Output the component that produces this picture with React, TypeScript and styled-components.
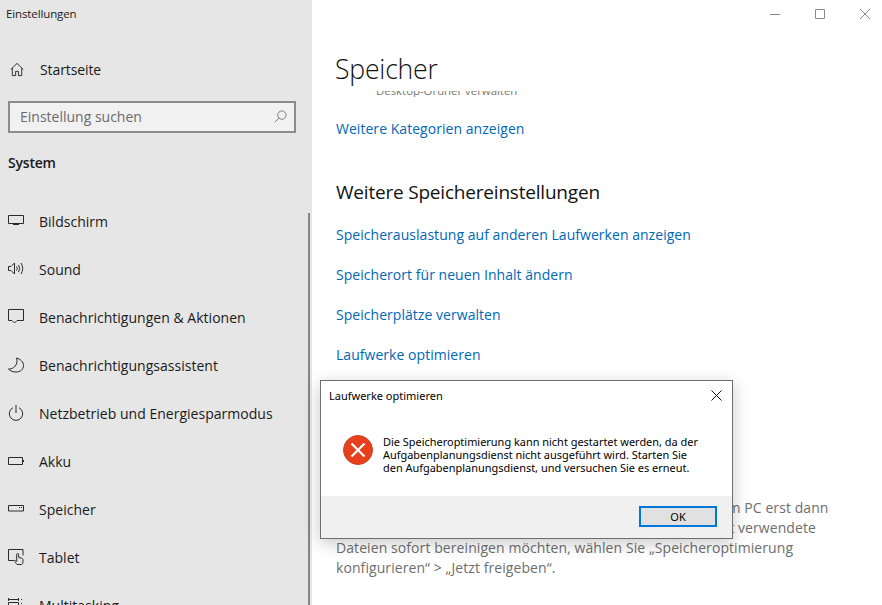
import styled, { createGlobalStyle } from 'styled-components';
import type { ReactNode } from 'react';

const GlobalStyle = createGlobalStyle`
  html, body {
    margin: 0;
    padding: 0;
    background: #fff;
    overflow: hidden;
  }
  * {
    box-sizing: border-box;
  }
`;

const Page = styled.div`
  position: relative;
  width: 882px;
  height: 605px;
  display: flex;
  overflow: hidden;
  background: #fff;
  font-family: "Open Sans", "Liberation Sans", sans-serif;
  color: #1a1a1a;
`;

const Sidebar = styled.aside`
  position: relative;
  flex: 0 0 312px;
  height: 605px;
  background: #e6e6e6;
  overflow: hidden;
`;

const AppTitle = styled.div`
  height: 28px;
  padding-left: 6px;
  font-size: 11.5px;
  line-height: 28px;
  letter-spacing: -0.12px;
`;

const HomeRow = styled.div`
  height: 28px;
  margin-top: 28px;
  padding: 0 0 1px 10px;
  display: flex;
  align-items: center;
  gap: 14px;
  font-size: 14px;
  letter-spacing: -0.1px;
`;

const SearchBox = styled.div`
  width: 288px;
  height: 32px;
  margin: 17px 0 0 8px;
  padding: 0 7px 2px 10px;
  display: flex;
  align-items: center;
  justify-content: space-between;
  background: #f1f1f1;
  border: 2px solid #8c8c8c;
  font-size: 14px;
  color: #6b6b6b;
`;

const SectionTitle = styled.div`
  height: 20px;
  margin: 20px 0 0 8px;
  font-size: 14px;
  font-weight: 600;
  line-height: 20px;
  letter-spacing: -0.2px;
`;

const NavList = styled.nav`
  margin-top: 24px;
  display: flex;
  flex-direction: column;
`;

const NavItem = styled.div`
  height: 48px;
  padding-left: 8px;
  display: flex;
  align-items: center;
  gap: 15px;
  font-size: 14px;
  letter-spacing: 0.02px;
  white-space: nowrap;
`;

const IconBox = styled.span`
  flex: 0 0 16px;
  width: 16px;
  height: 16px;
  display: block;
  color: #2a2a2a;
`;

const ScrollThumb = styled.div`
  position: absolute;
  top: 213px;
  right: 2px;
  bottom: 0;
  width: 2px;
  background: #858585;
`;

const Main = styled.main`
  flex: 1;
  height: 605px;
  display: flex;
  flex-direction: column;
  overflow: hidden;
`;

const WindowControls = styled.div`
  height: 28px;
  padding-right: 12px;
  display: flex;
  justify-content: flex-end;
  align-items: center;
  gap: 35px;
  color: #8a8a8a;
`;

const PageHeader = styled.header`
  height: 63px;
  padding: 21px 0 0 23px;
  font-size: 26.6px;
  font-weight: 300;
  line-height: 40px;
  letter-spacing: -0.2px;
  color: #111;
`;

const Content = styled.div`
  flex: 1;
  padding-left: 24px;
  overflow: hidden;
`;

const ClippedLine = styled.div`
  height: 6px;
  padding-left: 40px;
  display: flex;
  align-items: flex-end;
  overflow: hidden;
  font-size: 11.4px;
  line-height: 12px;
  color: #777;
`;

const Link = styled.a<{ $gap: number }>`
  display: block;
  height: 20px;
  margin-top: ${(p) => p.$gap}px;
  font-size: 14px;
  line-height: 20px;
  letter-spacing: 0.04px;
  color: #0067b8;
`;

const SubTitle = styled.h2`
  height: 28px;
  margin: 39px 0 0;
  font-size: 19px;
  font-weight: 400;
  line-height: 28px;
  letter-spacing: -0.2px;
  color: #111;
`;

const Paragraph = styled.p`
  margin: 133px 0 0;
  font-size: 14px;
  line-height: 20px;
  letter-spacing: 0.08px;
  white-space: nowrap;
  color: #6e6e6e;
`;

const Dialog = styled.div`
  position: absolute;
  left: 320px;
  top: 380px;
  width: 413px;
  height: 159px;
  display: flex;
  flex-direction: column;
  background: #fff;
  border: 1px solid #6e6e6e;
  box-shadow: 0 4px 16px rgba(0, 0, 0, 0.22);
  font-family: "Noto Sans", "Liberation Sans", sans-serif;
  color: #000;
`;

const DialogHeader = styled.div`
  height: 30px;
  padding: 0 10px 2px 8px;
  display: flex;
  align-items: center;
  justify-content: space-between;
  font-size: 11px;
`;

const DialogBody = styled.div`
  flex: 1;
  padding: 16px 0 0 22px;
  display: flex;
  align-items: flex-start;
  gap: 10px;
`;

const ErrorIcon = styled.svg`
  flex: 0 0 30px;
  margin-top: 8px;
`;

const Message = styled.div`
  padding-top: 8px;
  font-size: 10.95px;
  line-height: 13px;
  white-space: nowrap;
`;

const DialogFooter = styled.div`
  height: 42px;
  padding: 10px 15px 0 0;
  display: flex;
  justify-content: flex-end;
  background: #f0f0f0;
`;

const OkButton = styled.button`
  width: 78px;
  height: 21px;
  padding: 0;
  background: #e1e1e1;
  border: 2px solid #0078d7;
  font-family: inherit;
  font-size: 11px;
  line-height: 15px;
  color: #000;
`;

const Glyph = ({ children }: { children: ReactNode }) => (
  <IconBox>
    <svg width="16" height="16" viewBox="0 0 16 16" fill="none" stroke="currentColor" strokeWidth="1">
      {children}
    </svg>
  </IconBox>
);

const navItems: { label: string; icon: ReactNode }[] = [
  {
    label: 'Bildschirm',
    icon: <path d="M.5 2.500h15v8H.5zM8 10.500v1.500M5 11.500h6" />,
  },
  {
    label: 'Sound',
    icon: <path d="M.5 5.500v4h2.500l3.500 3.500V2L3 5.500zM8.500 5.500q1.600 2 0 4M10.500 4q2.400 3.500 0 7M13 2q3.400 5.500 0 11" />,
  },
  {
    label: 'Benachrichtigungen & Aktionen',
    icon: <path d="M.5.500h15v11H9l-2.500 2.500L4 11.500H.5z" />,
  },
  {
    label: 'Benachrichtigungsassistent',
    icon: <path d="M8.500 1C12.500 2 15.500 5 15.500 8.500 15.500 12.500 12 15 8 15 5 15 2 14 .5 12 6 12.500 10.500 7 8.500 1z" />,
  },
  {
    label: 'Netzbetrieb und Energiesparmodus',
    icon: <path d="M5 2.700a6.700 6.700 0 1 0 6 0M8 0v8" />,
  },
  {
    label: 'Akku',
    icon: <path d="M.5 4.500h14v7H.5zM15.500 7v2" />,
  },
  {
    label: 'Speicher',
    icon: <path d="M.5 4.500h15v5.500H.5zM11 6.500h1M13 6.500h1" />,
  },
  {
    label: 'Tablet',
    icon: (
      <path d="M6 11.500H.5V.500h14.500v6M9 15.500c-1-1-2.300-3-2.300-3.500 0-.8.8-.8 1.300-.3l.7.8V5.500a1 1 0 0 1 2 0v3l3 .7c1 .3 1.300 1 1.300 2v1.800c0 1-.7 2.500-1.500 2.500z" />
    ),
  },
  {
    label: 'Multitasking',
    icon: <path d="M.5 1v3M.5 2.500h10M10.500 1v3M.5 5.500h10v9H.5zM13.500 2v1M13.500 6v1M13.500 10v1" />,
  },
];

const App = () => (
  <>
    <GlobalStyle />
    <Page>
      <Sidebar>
        <AppTitle>Einstellungen</AppTitle>
        <HomeRow>
          <IconBox>
            <svg width="15" height="15" viewBox="0 0 16 16" fill="none" stroke="currentColor">
              <path d="M.8 8 7.500 1.500 14.200 8M2.500 6.500v8h3.500V10h3v4.500h3.500v-8" />
            </svg>
          </IconBox>
          Startseite
        </HomeRow>
        <SearchBox>
          Einstellung suchen
          <svg width="13" height="13" viewBox="0 0 14 14" fill="none" stroke="#777">
            <circle cx="8.500" cy="5.500" r="4.500" />
            <path d="M5.200 8.800.8 13.200" />
          </svg>
        </SearchBox>
        <SectionTitle>System</SectionTitle>
        <NavList>
          {navItems.map((item) => (
            <NavItem key={item.label}>
              <Glyph>{item.icon}</Glyph>
              {item.label}
            </NavItem>
          ))}
        </NavList>
        <ScrollThumb />
      </Sidebar>

      <Main>
        <WindowControls>
          <svg width="10" height="10" viewBox="0 0 10 10" stroke="currentColor">
            <path d="M0 5.500h10" />
          </svg>
          <svg width="10" height="10" viewBox="0 0 10 10" fill="none" stroke="currentColor">
            <path d="M.5.500h9v9h-9z" />
          </svg>
          <svg width="10" height="10" viewBox="0 0 10 10" stroke="currentColor">
            <path d="M0 0l10 10M10 0 0 10" />
          </svg>
        </WindowControls>
        <PageHeader>Speicher</PageHeader>
        <Content>
          <ClippedLine>Desktop-Ordner verwalten</ClippedLine>
          <Link $gap={22}>Weitere Kategorien anzeigen</Link>
          <SubTitle>Weitere Speichereinstellungen</SubTitle>
          <Link $gap={19}>Speicherauslastung auf anderen Laufwerken anzeigen</Link>
          <Link $gap={20}>Speicherort für neuen Inhalt ändern</Link>
          <Link $gap={20}>Speicherplätze verwalten</Link>
          <Link $gap={20}>Laufwerke optimieren</Link>
          <Paragraph>
            Die Speicheroptimierung löscht temporäre Dateien auf Ihrem PC erst dann
            <br />
            automatisch, wenn zu wenig Speicher frei ist. Wenn Sie nicht verwendete
            <br />
            Dateien sofort bereinigen möchten, wählen Sie „Speicheroptimierung
            <br />
            konfigurieren“ &gt; „Jetzt freigeben“.
          </Paragraph>
        </Content>
      </Main>

      <Dialog>
        <DialogHeader>
          Laufwerke optimieren
          <svg width="11" height="11" viewBox="0 0 11 11" stroke="#111">
            <path d="M.5.500l10 10M10.500.500l-10 10" />
          </svg>
        </DialogHeader>
        <DialogBody>
          <ErrorIcon width="30" height="30" viewBox="0 0 30 30">
            <circle cx="15" cy="15" r="14.500" fill="#e8401c" stroke="#c9442a" />
            <path d="M8.500 8.500l13 13M21.500 8.500l-13 13" stroke="#fff" strokeWidth="2.200" />
          </ErrorIcon>
          <Message>
            Die Speicheroptimierung kann nicht gestartet werden, da der
            <br />
            Aufgabenplanungsdienst nicht ausgeführt wird. Starten Sie
            <br />
            den Aufgabenplanungsdienst, und versuchen Sie es erneut.
          </Message>
        </DialogBody>
        <DialogFooter>
          <OkButton>OK</OkButton>
        </DialogFooter>
      </Dialog>
    </Page>
  </>
);

export default App;
